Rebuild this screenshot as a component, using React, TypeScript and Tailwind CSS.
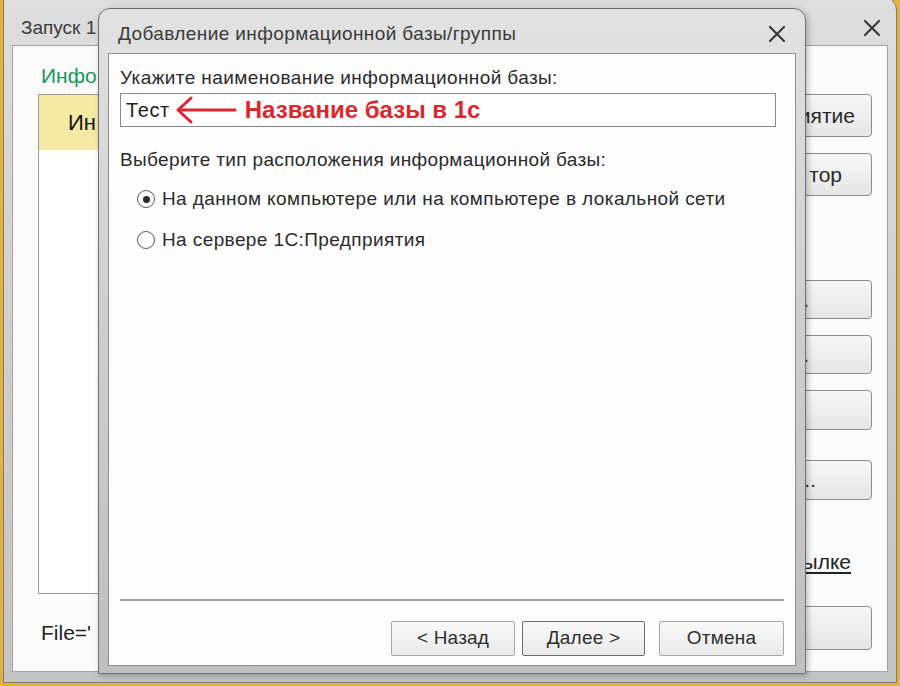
import React from "react"

const font = { fontFamily: '"Liberation Sans", Arial, sans-serif' }

function CloseIcon({ className = "" }: { className?: string }) {
  return (
    <svg width="20" height="20" viewBox="0 0 20 20" className={className}>
      <path d="M3 3 L17 17 M17 3 L3 17" stroke="#3a3a3a" strokeWidth="2.2" strokeLinecap="round" />
    </svg>
  )
}

function Radio({ checked }: { checked?: boolean }) {
  return (
    <span className="flex h-[18px] w-[18px] items-center justify-center rounded-full border border-[#5a5a5a] bg-white">
      {checked && <span className="h-[7px] w-[7px] rounded-full bg-[#2a2a2a]" />}
    </span>
  )
}

// launcher buttons sit mostly under the dialog, only their right ends show
function LauncherButton({ label, className = "" }: { label: string; className?: string }) {
  return (
    <div
      className={
        "flex items-center justify-end rounded-[4px] border border-[#8c8c8c] bg-gradient-to-b from-[#f7f7f7] to-[#e6e6e6] text-[21px] text-[#2a2a2a] " +
        className
      }
    >
      {label}
    </div>
  )
}

function DialogButton({ label, primary, className = "" }: { label: string; primary?: boolean; className?: string }) {
  return (
    <div
      className={
        "flex h-[35px] items-center justify-center rounded-[2px] border bg-gradient-to-b from-[#fafafa] to-[#e9e9e9] text-[19px] tracking-[0.2px] text-[#2e2e2e] " +
        (primary ? "border-[#6c6c6c] " : "border-[#a8a8a8] ") +
        className
      }
    >
      {label}
    </div>
  )
}

export default function App() {
  return (
    <div className="relative h-[686px] w-[900px] overflow-hidden bg-[#e3b23c]" style={font}>
      {/* Back window: launcher */}
      <div className="absolute left-[3px] top-[-4px] flex h-[687px] w-[894px] flex-col rounded-tr-[14px] border border-[#7c7c7c] bg-gradient-to-b from-[#dedede] via-[#cfcfcf] to-[#c4c4c4]">
        <div className="flex h-[48px] shrink-0 items-center justify-between pl-[17px] pr-[14px] pt-[14px]">
          <span className="text-[19px] text-[#3c3c3c]">Запуск 1</span>
          <CloseIcon />
        </div>
        <div className="mx-[8px] mb-[10px] flex flex-1 border border-[#a2a2a2] bg-[#fbfbfb]">
          <div className="flex flex-1 flex-col pl-[25px] pt-[18px]">
            <span className="ml-[3px] text-[21px] leading-[24px] text-[#17985a]">Инфо</span>
            <div className="mt-[6px] flex h-[500px] flex-col border border-[#9a9a9a] bg-white">
              <div className="flex h-[55px] items-center bg-[#f5e9a6] pl-[29px] text-[22px] text-[#111]">Ин</div>
            </div>
            <span className="ml-[3px] mt-[23px] text-[21px] text-[#222]">File='</span>
          </div>
          <div className="flex w-[206px] flex-col pr-[15px] pt-[48px]">
            <LauncherButton label="иятие" className="h-[43px] pr-[16px]" />
            <LauncherButton label="тор" className="mt-[16px] h-[43px] pr-[29px]" />
            <LauncherButton label="." className="mt-[84px] h-[39px] pr-[62px]" />
            <LauncherButton label="." className="mt-[16px] h-[39px] pr-[62px]" />
            <LauncherButton label="" className="mt-[16px] h-[40px]" />
            <LauncherButton label=".." className="mt-[30px] h-[40px] pr-[55px]" />
            <span className="mt-[46px] pr-[21px] text-right text-[21px] text-[#222] underline underline-offset-[3px]">
              ылке
            </span>
            <LauncherButton label="" className="mt-[28px] h-[44px]" />
          </div>
        </div>
      </div>

      {/* Front window: add infobase dialog */}
      <div className="absolute left-[98px] top-[8px] flex h-[666px] w-[708px] flex-col rounded-t-[12px] border border-[#6f6f6f] bg-gradient-to-b from-[#e2e2e2] via-[#cdcdcd] to-[#bfbfbf] shadow-[2px_2px_6px_rgba(0,0,0,0.25)]">
        <div className="flex h-[44px] shrink-0 items-center justify-between pl-[19px] pr-[18px] pt-[6px]">
          <span className="text-[19px] tracking-[0.4px] text-[#3a3a3a]">Добавление информационной базы/группы</span>
          <CloseIcon />
        </div>
        <div className="mx-[9px] mb-[7px] flex flex-1 flex-col border border-[#8e8e8e] bg-[#fdfdfd] pl-[11px] pr-[11px] pb-[9px]">
          <span className="mt-[13px] text-[19px] leading-[22px] tracking-[0.4px] text-[#2b2b2b]">
            Укажите наименование информационной базы:
          </span>
          <div className="mt-[4px] mr-[8px] flex h-[34px] items-center border border-[#8a8a8a] bg-white pl-[5px]">
            <span className="text-[20px] tracking-[0.6px] text-[#1e1e1e]">Тест</span>
            <svg width="62" height="30" viewBox="0 0 62 30" className="ml-[5px]">
              <path d="M4 15 L60 15" stroke="#e3232b" strokeWidth="3" strokeLinecap="round" />
              <path d="M16 3 L3 15 L16 27" stroke="#e3232b" strokeWidth="3" fill="none" strokeLinecap="round" strokeLinejoin="round" />
            </svg>
            <span className="ml-[8px] text-[24px] font-bold tracking-[0px] text-[#e0262c]">Название базы в 1с</span>
          </div>
          <span className="mt-[22px] text-[19px] leading-[22px] tracking-[0.35px] text-[#2b2b2b]">
            Выберите тип расположения информационной базы:
          </span>
          <div className="mt-[16px] flex h-[24px] items-center gap-[7px] pl-[17px]">
            <Radio checked />
            <span className="text-[19px] tracking-[0.4px] text-[#2b2b2b]">
              На данном компьютере или на компьютере в локальной сети
            </span>
          </div>
          <div className="mt-[17px] flex h-[24px] items-center gap-[7px] pl-[17px]">
            <Radio />
            <span className="text-[19px] tracking-[0.4px] text-[#2b2b2b]">На сервере 1С:Предприятия</span>
          </div>
          <div className="flex-1" />
          <div className="h-[2px] bg-[#a4a4a4]" />
          <div className="mt-[20px] flex justify-end">
            <DialogButton label="< Назад" className="w-[124px]" />
            <DialogButton label="Далее >" primary className="ml-[7px] w-[123px]" />
            <DialogButton label="Отмена" className="ml-[14px] w-[125px]" />
          </div>
        </div>
      </div>
    </div>
  )
}
